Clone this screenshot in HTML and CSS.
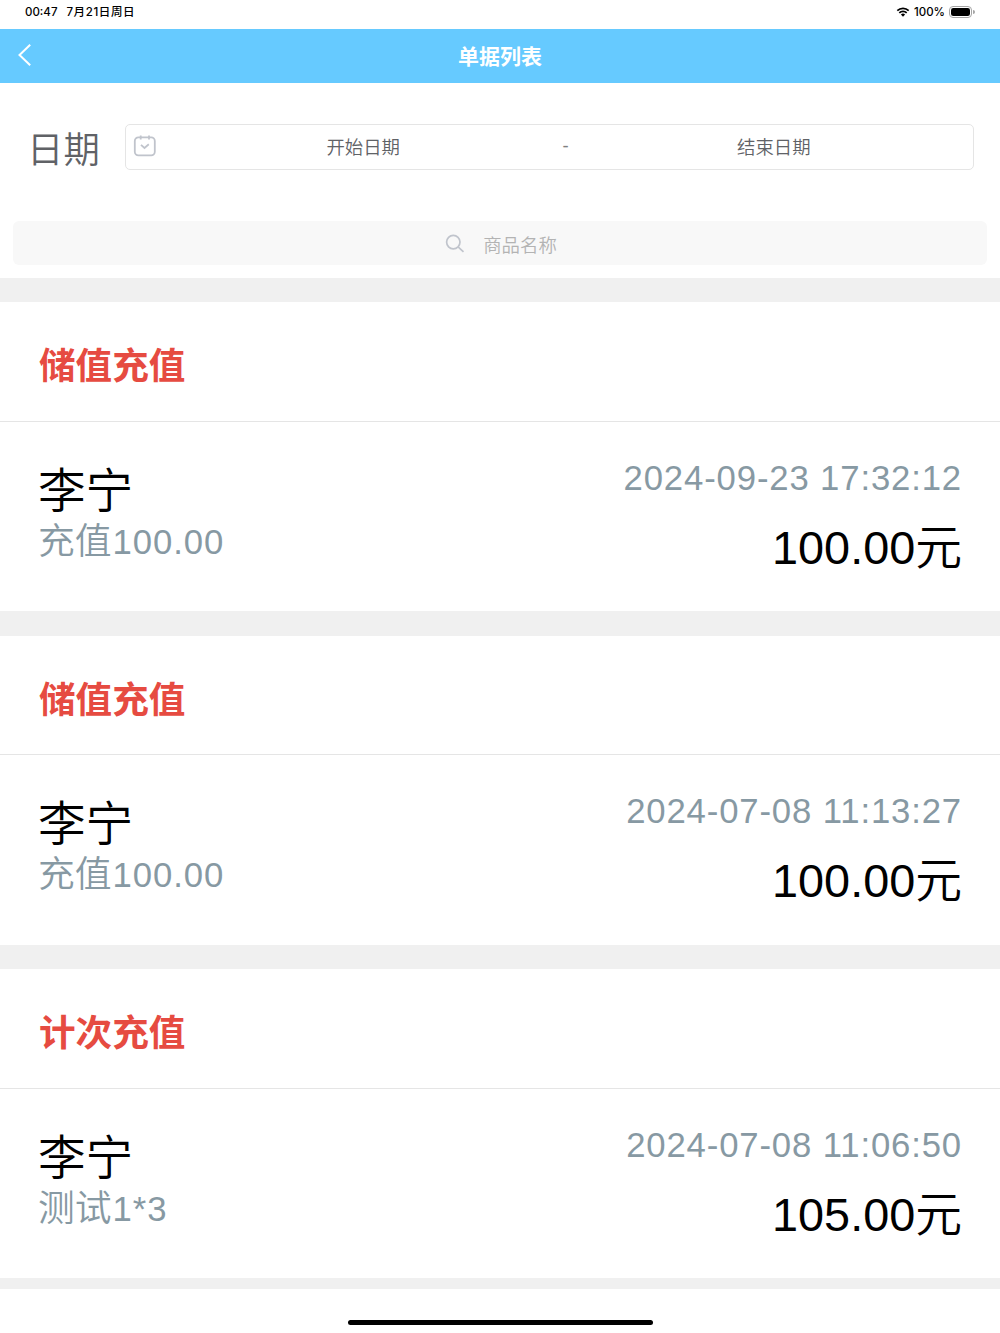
FILE: index.html
```html
<!DOCTYPE html>
<html lang="zh-CN">
<head>
  <meta charset="UTF-8">
  <meta name="viewport" content="width=device-width, initial-scale=1.0">
  <title>单据列表</title>
  <link rel="stylesheet" href="styles.css">
</head>
<body>
  <div class="status-bar">
    <div class="status-left">
      <span>00:47</span>
      <span class="day">7月21日周日</span>
    </div>
    <div class="status-right">
      <svg class="wifi" width="14" height="10" viewBox="0 0 13 10">
        <path d="M0.8 3.7a8.2 8.2 0 0 1 11.4 0M2.8 5.8a5.3 5.3 0 0 1 7.4 0" fill="none" stroke="#000" stroke-width="1.7"/>
        <path d="M6.5 9.8L4.4 7.6a3 3 0 0 1 4.2 0z"/>
      </svg>
      <span>100%</span>
      <svg class="battery" width="26" height="12" viewBox="0 0 26 12">
        <rect x="0.5" y="0.5" width="22" height="11" rx="3.5" fill="none" stroke="#a5a5a5"/>
        <rect x="2" y="2" width="19" height="8" rx="2.3"/>
        <path d="M24 4v4a2 2 0 0 0 0-4z" fill="#a5a5a5"/>
      </svg>
    </div>
  </div>

  <header class="nav-bar">
    <svg class="back" width="16" height="24" viewBox="0 0 16 24">
      <path d="M13.2 1.8L2.5 12l10.7 10.2" fill="none" stroke="#fff" stroke-width="2"/>
    </svg>
    <h1>单据列表</h1>
  </header>

  <section class="filter">
    <div class="date-row">
      <label>日期</label>
      <div class="date-range">
        <svg class="calendar" width="24" height="24" viewBox="0 0 24 24" fill="none" stroke="#c0c4cc" stroke-width="1.8">
          <rect x="1.8" y="3.3" width="20" height="18" rx="3.6"/>
          <path d="M7.7 1.5v4M16 1.5v4"/>
          <path d="M8 10.8l3.5 3.2 4.3-3.7"/>
        </svg>
        <span class="date-input">开始日期</span>
        <span class="separator">-</span>
        <span class="date-input">结束日期</span>
      </div>
    </div>
    <div class="search">
      <svg width="20" height="20" viewBox="0 0 20 20" fill="none" stroke="#c0c4cc" stroke-width="1.7">
        <circle cx="8.3" cy="8.1" r="6.7"/>
        <path d="M13.1 12.8l5.4 5"/>
      </svg>
      <span>商品名称</span>
    </div>
  </section>

  <main class="list">
    <article class="card">
      <h2>储值充值</h2>
      <div class="card-body">
        <div class="info">
          <div class="name">李宁</div>
          <div class="desc">充值<span class="num">100.00</span></div>
        </div>
        <div class="summary">
          <div class="time">2024-09-23 17:32:12</div>
          <div class="amount">100.00元</div>
        </div>
      </div>
    </article>

    <article class="card">
      <h2>储值充值</h2>
      <div class="card-body">
        <div class="info">
          <div class="name">李宁</div>
          <div class="desc">充值<span class="num">100.00</span></div>
        </div>
        <div class="summary">
          <div class="time">2024-07-08 11:13:27</div>
          <div class="amount">100.00元</div>
        </div>
      </div>
    </article>

    <article class="card">
      <h2>计次充值</h2>
      <div class="card-body">
        <div class="info">
          <div class="name">李宁</div>
          <div class="desc">测试<span class="num">1*3</span></div>
        </div>
        <div class="summary">
          <div class="time">2024-07-08 11:06:50</div>
          <div class="amount">105.00元</div>
        </div>
      </div>
    </article>
  </main>

  <footer class="bottom-bar">
    <div class="home-indicator"></div>
  </footer>
</body>
</html>
```
FILE: styles.css
```css
* {
  box-sizing: border-box;
}

body {
  margin: 0;
  height: 1333px;
  overflow: hidden;
  display: flex;
  flex-direction: column;
  background: #fff;
  color: #000;
  font-family: "Liberation Sans", "Noto Sans CJK SC", sans-serif;
  font-weight: 350;
}

h1, h2 {
  margin: 0;
}

svg {
  display: block;
  flex: none;
}

.status-bar {
  height: 29px;
  padding: 0 25px;
  display: flex;
  justify-content: space-between;
  font-family: Inter, "Noto Sans CJK SC", sans-serif;
  font-size: 11.5px;
  font-weight: 500;
  line-height: 24px;
}

.status-left {
  display: flex;
  gap: 9px;
}

.day {
  letter-spacing: 0.6px;
}

.status-right {
  display: flex;
  align-items: center;
  gap: 4px;
  height: 24px;
}

/* Header */
.nav-bar {
  height: 54.4px;
  padding: 0 17px;
  display: grid;
  grid-template-columns: 16px 1fr 16px;
  align-items: center;
  background: #66caff;
}

.nav-bar h1 {
  color: #fff;
  font-size: 21px;
  line-height: 55px;
  text-align: center;
}

.back {
  margin-bottom: 3px;
}

/* Filter */
.filter {
  height: 194.2px;
  padding: 40.5px 13px 0;
}

.date-row {
  display: flex;
  height: 46px;
  padding: 0 13px 0 14px;
}

.date-row label {
  width: 98px;
  font-size: 36.4px;
  line-height: 54px;
  color: #606266;
}

.date-range {
  flex: 1;
  display: flex;
  align-items: center;
  padding: 0 0 2px 7px;
  border: 1.5px solid #e5e5e5;
  border-radius: 5px;
  font-size: 18.4px;
  color: #606266;
}

.calendar {
  margin-right: 1px;
}

.date-input {
  flex: 1;
  padding-left: 6px;
  text-align: center;
}

.separator {
  color: #808080;
}

.search {
  height: 44px;
  margin-top: 51px;
  padding-left: 2px;
  display: flex;
  align-items: center;
  justify-content: center;
  gap: 18px;
  border-radius: 6px;
  background: #f8f8f8;
  color: #b3b3b3;
  font-size: 18.4px;
}

.search svg {
  margin-top: 2px;
}

.search span {
  margin-top: 2px;
}

/* Orders */
.list {
  display: flex;
  flex-direction: column;
  gap: 24.4px;
  padding: 24.5px 0 11px;
  background: #f0f0f0;
}

.card {
  height: 309.1px;
  background: #fff;
}

.card h2 {
  height: 119.6px;
  padding: 0 39px;
  border-bottom: 1px solid #e5e5e5;
  color: #e64b41;
  font-size: 36.6px;
  line-height: 129px;
}

.card-body {
  display: flex;
  justify-content: space-between;
  padding: 36px 39px 0 38px;
}

.name,
.amount {
  font-size: 46.8px;
}

.name {
  height: 59px;
  font-size: 47.6px;
  line-height: 68px;
}

.desc,
.time {
  color: #8799a3;
  font-size: 36.8px;
}

.desc {
  line-height: 50px;
}

.summary {
  text-align: right;
}

.time {
  margin-right: -1px;
  font-size: 34.7px;
  letter-spacing: 0.86px;
  line-height: 40px;
}

.num {
  margin-left: 1px;
  font-size: 34.7px;
  letter-spacing: 0.9px;
}

.amount {
  height: 100px;
  margin-right: -1px;
  line-height: 101px;
}

/* Home indicator */
.bottom-bar {
  flex: 1;
  display: flex;
  justify-content: center;
  align-items: flex-end;
  padding-bottom: 8px;
}

.home-indicator {
  width: 305px;
  height: 5px;
  border-radius: 3px;
  background: #000;
}
```
